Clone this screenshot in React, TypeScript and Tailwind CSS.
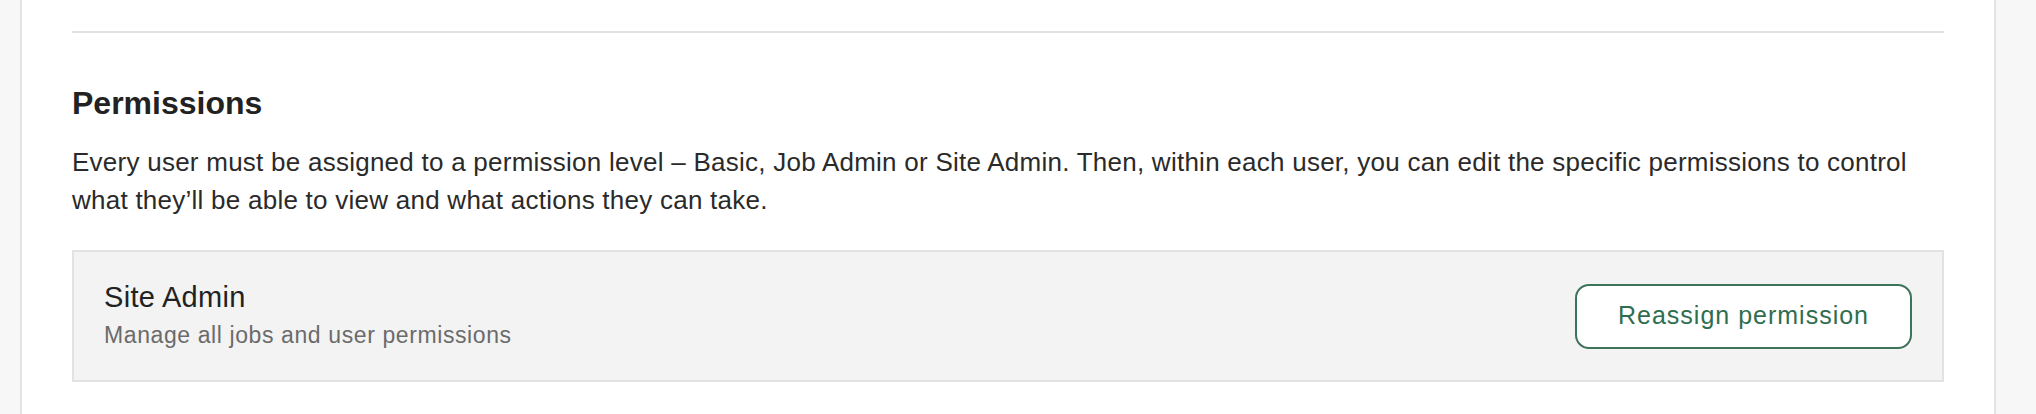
import React from 'react';

const PermissionLevelRow: React.FC<{ title: string; description: string }> = ({ title, description }) => (
  <div className="flex items-center justify-between border-2 border-[#e2e2e2] bg-[#f3f3f3] px-[30px] py-[30px]">
    <div>
      <div className="text-[29px] leading-[30px] text-[#222222] tracking-[0.3px]">{title}</div>
      <div className="mt-[8px] text-[23px] leading-[30px] text-[#6b6b6b] tracking-[0.6px]">{description}</div>
    </div>
    <button
      type="button"
      className="h-[65px] w-[337px] rounded-[14px] border-2 border-[#3b7458] bg-white text-[25px] text-[#2f6d4f] tracking-[1px]"
    >
      Reassign permission
    </button>
  </div>
);

export default function App() {
  return (
    <div
      className="flex h-[414px] overflow-hidden bg-[#f7f7f7] pl-[20px] pr-[40px]"
      style={{ fontFamily: '"Liberation Sans", Arial, sans-serif' }}
    >
      <div className="flex-1 border-x-2 border-[#e3e3e3] bg-white px-[50px]">
        <div className="mt-[31px] h-[2px] bg-[#e1e1e1]" />

        <h2 className="mt-[51px] text-[32px] font-bold leading-[38px] text-[#222222]">Permissions</h2>
        <p className="mt-[21px] text-[26px] leading-[38px] text-[#2a2a2a] tracking-[0.25px]">
          Every user must be assigned to a permission level – Basic, Job Admin or Site Admin. Then, within each
          user, you can edit the specific permissions to control what they’ll be able to view and what actions they
          can take.
        </p>

        <div className="mt-[31px]">
          <PermissionLevelRow title="Site Admin" description="Manage all jobs and user permissions" />
        </div>
      </div>
    </div>
  );
}
